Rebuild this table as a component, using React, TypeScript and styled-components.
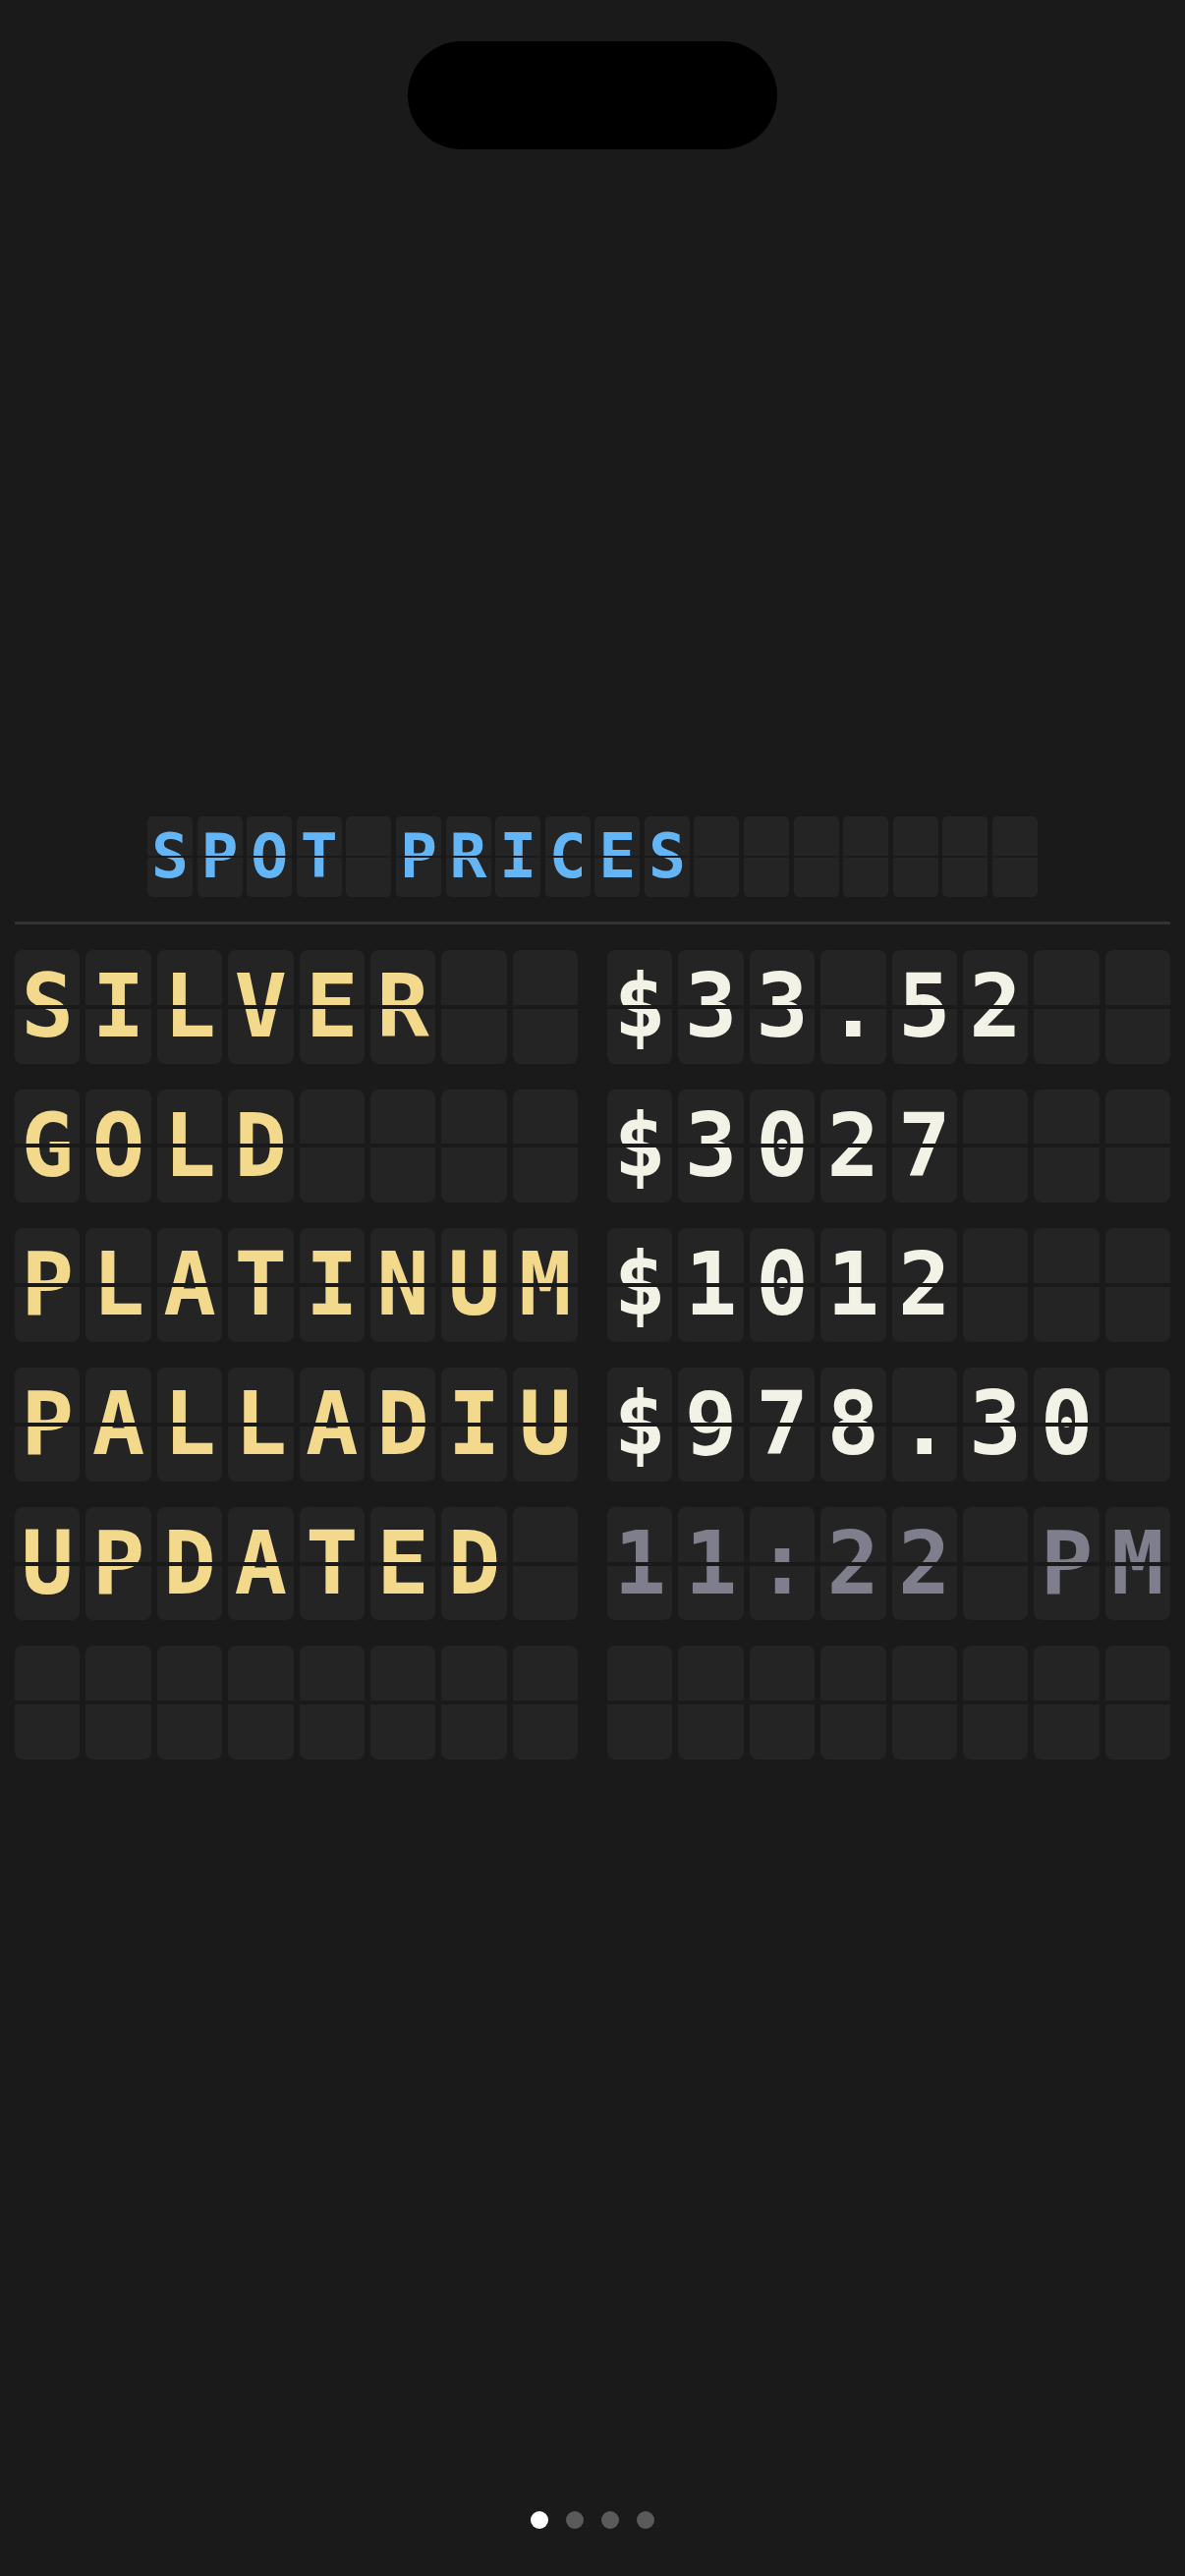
import React from "react";
import styled, { createGlobalStyle, css } from "styled-components";

const GlobalStyle = createGlobalStyle`
  html, body {
    margin: 0;
    padding: 0;
    background: #1a1a1a;
  }
  * { box-sizing: border-box; }
`;

type Tone = "header" | "label" | "price" | "time";
type Size = "sm" | "lg";

const toneColor: Record<Tone, string> = {
  header: "#64b5f6",
  label: "#f3d98b",
  price: "#f2f2e6",
  time: "#7e7e8c",
};

const Screen = styled.div`
  position: relative;
  height: 2622px;
  padding: 0 15px;
  display: flex;
  flex-direction: column;
  justify-content: center;
  background: #1a1a1a;
  font-family: "DejaVu Sans Mono", "Liberation Mono", monospace;
`;

const Island = styled.div`
  position: absolute;
  top: 42px;
  left: 50%;
  transform: translateX(-50%);
  width: 376px;
  height: 110px;
  border-radius: 55px;
  background: #000;
`;

const Board = styled.div`
  display: flex;
  flex-direction: column;
`;

const HeaderRow = styled.div`
  display: flex;
  justify-content: center;
  gap: 4.6px;
`;

const Divider = styled.div`
  height: 3px;
  background: #333333;
  margin: 25px 0 26px;
`;

const Rows = styled.div`
  display: flex;
  flex-direction: column;
  gap: 26.2px;
`;

const Row = styled.div`
  display: grid;
  grid-template-columns: 1fr 1fr;
  column-gap: 30px;
`;

const Group = styled.div`
  display: grid;
  grid-template-columns: repeat(8, 1fr);
  gap: 6px;
`;

const Tile = styled.div<{ $size: Size; $tone: Tone }>`
  position: relative;
  background: #242424;
  color: ${(p) => toneColor[p.$tone]};
  font-weight: 700;
  text-align: center;
  overflow: hidden;
  ${(p) =>
    p.$size === "lg"
      ? css`
          height: 115.5px;
          line-height: 115.5px;
          font-size: 89px;
          border-radius: 8px;
        `
      : css`
          width: 46px;
          height: 82px;
          line-height: 82px;
          font-size: 63px;
          border-radius: 5px;
        `}

  &::after {
    content: "";
    position: absolute;
    left: 0;
    right: 0;
    top: 50%;
    height: ${(p) => (p.$size === "lg" ? "4px" : "2px")};
    transform: translateY(-50%);
    background: #1a1a1a;
  }
`;

const Dots = styled.div`
  position: absolute;
  left: 0;
  right: 0;
  bottom: 48px;
  display: flex;
  justify-content: center;
  gap: 18px;
`;

const Dot = styled.span<{ $active?: boolean }>`
  width: 18px;
  height: 18px;
  border-radius: 50%;
  background: ${(p) => (p.$active ? "#ffffff" : "#5a5a5a")};
`;

const pad = (s: string, n: number) => s.padEnd(n, " ").slice(0, n).split("");

const data: { label: string; value: string; tone: Tone }[] = [
  { label: "SILVER", value: "$33.52", tone: "price" },
  { label: "GOLD", value: "$3027", tone: "price" },
  { label: "PLATINUM", value: "$1012", tone: "price" },
  { label: "PALLADIUM", value: "$978.30", tone: "price" },
  { label: "UPDATED", value: "11:22 PM", tone: "time" },
  { label: "", value: "", tone: "price" },
];

const Flap: React.FC<{ ch: string; size: Size; tone: Tone }> = ({ ch, size, tone }) => (
  <Tile $size={size} $tone={tone}>
    {ch === " " ? "\u00a0" : ch}
  </Tile>
);

export default function App() {
  return (
    <>
      <GlobalStyle />
      <Screen>
        <Island />
        <Board>
          <HeaderRow>
            {pad("SPOT PRICES", 18).map((c, i) => (
              <Flap key={i} ch={c} size="sm" tone="header" />
            ))}
          </HeaderRow>
          <Divider />
          <Rows>
            {data.map((r, ri) => (
              <Row key={ri}>
                <Group>
                  {pad(r.label, 8).map((c, i) => (
                    <Flap key={i} ch={c} size="lg" tone="label" />
                  ))}
                </Group>
                <Group>
                  {pad(r.value, 8).map((c, i) => (
                    <Flap key={i} ch={c} size="lg" tone={r.tone} />
                  ))}
                </Group>
              </Row>
            ))}
          </Rows>
        </Board>
        <Dots>
          <Dot $active />
          <Dot />
          <Dot />
          <Dot />
        </Dots>
      </Screen>
    </>
  );
}
